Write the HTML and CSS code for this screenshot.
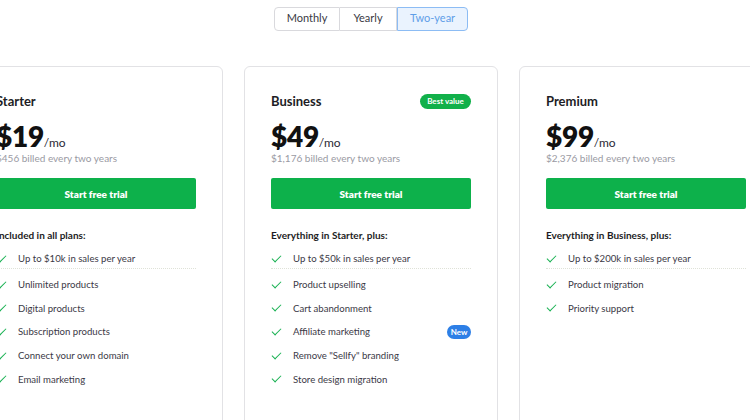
FILE: index.html
```html
<!DOCTYPE html>
<html>
<head>
<meta charset="utf-8">
<link rel="stylesheet" href="styles.css">
</head>
<body>
<div class="page">
  <div class="toggle">
    <button class="opt">Monthly</button>
    <button class="opt">Yearly</button>
    <button class="opt active">Two-year</button>
  </div>
  <div class="cards">
    <div class="card">
      <div class="head"><span class="name">Starter</span></div>
      <div class="price"><span class="amt">$19</span><span class="per">/mo</span></div>
      <div class="billed">$456 billed every two years</div>
      <button class="cta">Start free trial</button>
      <div class="lead">Included in all plans:</div>
      <ul class="feats">
        <li class="first"><i class="chk"></i><span>Up to $10k in sales per year</span></li>
        <li><i class="chk"></i><span>Unlimited products</span></li>
        <li><i class="chk"></i><span>Digital products</span></li>
        <li><i class="chk"></i><span>Subscription products</span></li>
        <li><i class="chk"></i><span>Connect your own domain</span></li>
        <li><i class="chk"></i><span>Email marketing</span></li>
      </ul>
    </div>
    <div class="card">
      <div class="head"><span class="name">Business</span><span class="badge green">Best value</span></div>
      <div class="price"><span class="amt">$49</span><span class="per">/mo</span></div>
      <div class="billed">$1,176 billed every two years</div>
      <button class="cta">Start free trial</button>
      <div class="lead">Everything in Starter, plus:</div>
      <ul class="feats">
        <li class="first"><i class="chk"></i><span>Up to $50k in sales per year</span></li>
        <li><i class="chk"></i><span>Product upselling</span></li>
        <li><i class="chk"></i><span>Cart abandonment</span></li>
        <li><i class="chk"></i><span>Affiliate marketing</span><span class="badge blue">New</span></li>
        <li><i class="chk"></i><span>Remove "Sellfy" branding</span></li>
        <li><i class="chk"></i><span>Store design migration</span></li>
      </ul>
    </div>
    <div class="card">
      <div class="head"><span class="name">Premium</span></div>
      <div class="price"><span class="amt">$99</span><span class="per">/mo</span></div>
      <div class="billed">$2,376 billed every two years</div>
      <button class="cta">Start free trial</button>
      <div class="lead">Everything in Business, plus:</div>
      <ul class="feats">
        <li class="first"><i class="chk"></i><span>Up to $200k in sales per year</span></li>
        <li><i class="chk"></i><span>Product migration</span></li>
        <li><i class="chk"></i><span>Priority support</span></li>
      </ul>
    </div>
  </div>
</div>
</body>
</html>
```
FILE: styles.css
```css
* { box-sizing: border-box; }
html, body { margin: 0; padding: 0; background: #fff; }
body {
  width: 750px;
  height: 420px;
  overflow: hidden;
  font-family: Lato, "Liberation Sans", sans-serif;
  color: #2a2a35;
}
.page {
  width: 742px;
  display: flex;
  flex-direction: column;
  align-items: center;
  padding-top: 7px;
}
.toggle {
  display: flex;
  height: 24px;
}
.opt {
  font-family: inherit;
  font-size: 11px;
  line-height: 20px;
  color: #3a3a44;
  background: #fff;
  border: 1px solid #d9d9dd;
  margin: 0;
  padding: 0 0 2px;
  height: 24px;
  cursor: pointer;
}
.opt:nth-child(1) { width: 66px; border-radius: 4px 0 0 4px; }
.opt:nth-child(2) { width: 57px; border-left: none; }
.opt:nth-child(3) { width: 71px; border-radius: 0 4px 4px 0; }
.opt.active {
  background: #eaf3fe;
  border: 1px solid #8cbcf4;
  color: #5f9ee8;
}
.cards {
  width: 742px;
  display: flex;
  justify-content: center;
  gap: 21px;
  margin-top: 35px;
}
.card {
  flex: 0 0 254px;
  height: 380px;
  border: 1px solid #e2e2e5;
  border-radius: 6px;
  padding: 26px 26px 0 26px;
}
.head {
  display: flex;
  justify-content: space-between;
  align-items: center;
  height: 16px;
}
.name {
  font-weight: 700;
  font-size: 13px;
  color: #1d1d24;
}
.badge {
  display: inline-block;
  color: #fff;
  font-weight: 700;
  font-size: 8px;
  line-height: 15px;
  height: 15px;
  border-radius: 8px;
  padding: 0 7px;
}
.badge.green { background: #11b04a; width: 51px; text-align: center; padding: 0; }
.badge.blue { background: #2d7fe6; width: 24px; text-align: center; padding: 0; height: 14px; line-height: 14px; margin-left: auto; }
.price {
  margin-top: 12px;
  height: 30px;
  line-height: 30px;
  color: #111;
}
.amt {
  font-weight: 800;
  font-size: 28px;
  letter-spacing: -0.3px;
}
.per {
  font-size: 12px;
  color: #2a2a35;
}
.billed {
  font-size: 10px;
  color: #9a9aa3;
  line-height: 14px;
}
.cta {
  display: block;
  width: 200px;
  height: 31px;
  margin-top: 13px;
  background: #0db14b;
  border: none;
  border-radius: 2px;
  color: #fff;
  font-family: inherit;
  font-weight: 800;
  font-size: 10px;
  padding: 0;
}
.lead {
  margin-top: 19px;
  font-weight: 700;
  font-size: 10px;
  color: #1d1d24;
  line-height: 14px;
}
.feats {
  list-style: none;
  margin: 7px 0 0;
  padding: 0;
}
.feats li {
  display: flex;
  align-items: center;
  height: 23.7px;
  font-size: 9.6px;
  color: #3b3946;
}
.feats li.first {
  border-bottom: 1px dotted #dfe2d8;
  height: 20px;
  margin-bottom: 3.7px;
}
.chk {
  display: inline-block;
  width: 9px;
  height: 5px;
  border-left: 1.5px solid #18b152;
  border-bottom: 1.5px solid #18b152;
  transform: rotate(-45deg);
  margin: -3px 12px 0 1px;
}
```
